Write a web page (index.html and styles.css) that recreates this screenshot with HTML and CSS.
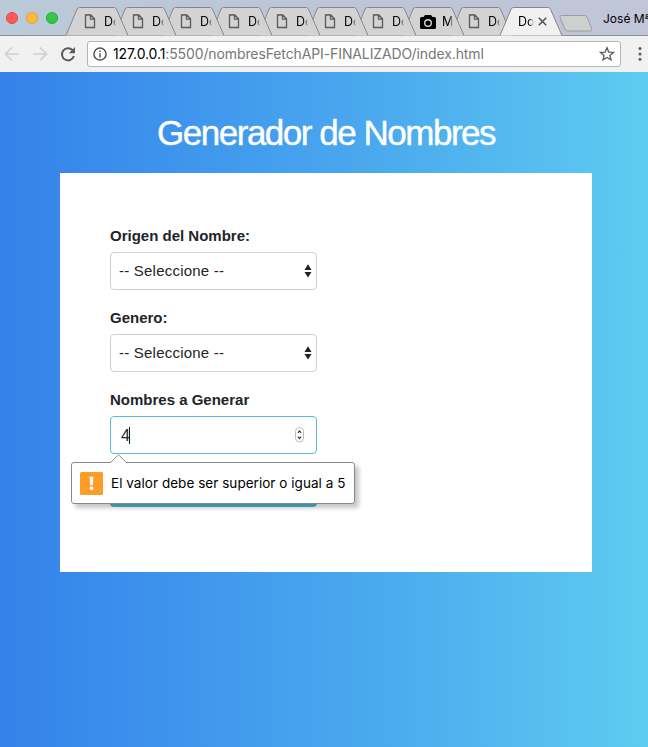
FILE: index.html
```html
<!DOCTYPE html>
<html lang="es">
<head>
<meta charset="utf-8">
<title>Generador de Nombres</title>
<link rel="stylesheet" href="styles.css">
</head>
<body>
<svg class="defs" aria-hidden="true">
  <symbol id="shape" viewBox="0 0 62 29"><path class="tab-shape" d="M0 28.5 L11 2.200 Q11.800 .5 13.500 .5 L48 .5 Q49.700 .5 50.500 2.200 L62 28.500"/></symbol>
  <symbol id="file" viewBox="0 0 12 15"><path class="file-line" d="M1.500 1 H6.800 L10.500 4.800 V13.500 H1.500 Z M6.500 1 V5.200 H10.500"/></symbol>
</svg>
<header class="browser">
  <div class="tabstrip">
    <div class="lights"><i class="red"></i><i class="yellow"></i><i class="green"></i></div>
    <div class="tabs">
      <div class="tab"><svg class="bg"><use href="#shape"/></svg><svg class="fav"><use href="#file"/></svg><span>Do</span></div>
      <div class="tab"><svg class="bg"><use href="#shape"/></svg><svg class="fav"><use href="#file"/></svg><span>Do</span></div>
      <div class="tab"><svg class="bg"><use href="#shape"/></svg><svg class="fav"><use href="#file"/></svg><span>Do</span></div>
      <div class="tab"><svg class="bg"><use href="#shape"/></svg><svg class="fav"><use href="#file"/></svg><span>Do</span></div>
      <div class="tab"><svg class="bg"><use href="#shape"/></svg><svg class="fav"><use href="#file"/></svg><span>Do</span></div>
      <div class="tab"><svg class="bg"><use href="#shape"/></svg><svg class="fav"><use href="#file"/></svg><span>Do</span></div>
      <div class="tab"><svg class="bg"><use href="#shape"/></svg><svg class="fav"><use href="#file"/></svg><span>Do</span></div>
      <div class="tab camera"><svg class="bg"><use href="#shape"/></svg><svg class="cam" viewBox="0 0 16 14"><path d="M5 0H11L12.500 2H14.500Q16 2 16 3.500V12.500Q16 14 14.500 14H1.500Q0 14 0 12.500V3.500Q0 2 1.500 2H3.500Z"/><circle cx="8" cy="8" r="3.300" fill="none" stroke="#d6d6d6" stroke-width="1.400"/></svg><span class="plain">M</span></div>
      <div class="tab"><svg class="bg"><use href="#shape"/></svg><svg class="fav"><use href="#file"/></svg><span>Do</span></div>
      <div class="tab active"><svg class="bg"><use href="#shape"/></svg><span>Do</span><svg class="close" viewBox="0 0 9 9"><path d="M.8 .8 8.200 8.200M8.200 .8 .8 8.200"/></svg></div>
    </div>
    <svg class="newtab" viewBox="0 0 34 17"><path d="M2.500 .5H25.500Q27.500 .5 28.300 2.500L32.500 13.500Q33.500 16 31.500 16H8.500Q6.500 16 5.700 14L1 2.500Q.4 .5 2.500 .5Z"/></svg>
    <div class="profile">José Mª</div>
  </div>
  <div class="toolbar">
    <svg class="nav" viewBox="0 0 82 36">
      <g class="arrows"><path d="M19 18H6M12 11.500 5.500 18 12 24.500"/><path d="M33 18H46M40 11.500 46.500 18 40 24.500"/></g>
      <path class="reload" d="M72.600 14.200A6.100 6.100 0 1 0 73.900 20"/><path class="reload-head" d="M75 11V17.200H68.800Z"/>
    </svg>
    <div class="address">
      <svg class="info" viewBox="0 0 14 14"><circle cx="7" cy="7" r="6.100"/><path d="M7 6.200V10.500M7 3.500V5"/></svg>
      <div class="url"><b>127.0.0.1</b>:5500/nombresFetchAPI-FINALIZADO/index.html</div>
      <svg class="star" viewBox="0 0 16 16"><path d="M8 1.700 9.800 6.100 14.400 6.400 10.900 9.400 12 13.900 8 11.500 4 13.900 5.100 9.400 1.600 6.400 6.200 6.100Z"/></svg>
    </div>
    <svg class="more" viewBox="0 0 4 16"><circle cx="2" cy="2.500" r="1.500"/><circle cx="2" cy="7.900" r="1.500"/><circle cx="2" cy="13.300" r="1.500"/></svg>
  </div>
</header>
<main class="page">
  <h1>Generador de Nombres</h1>
  <form class="panel">
    <div class="group">
      <label>Origen del Nombre:</label>
      <div class="field"><span>-- Seleccione --</span><svg class="updown" viewBox="0 0 8 14"><path d="M4 .3 7.500 5.900H.5ZM.5 8H7.500L4 13.600Z"/></svg></div>
    </div>
    <div class="group">
      <label>Genero:</label>
      <div class="field"><span>-- Seleccione --</span><svg class="updown" viewBox="0 0 8 14"><path d="M4 .3 7.500 5.900H.5ZM.5 8H7.500L4 13.600Z"/></svg></div>
    </div>
    <div class="group last">
      <label>Nombres a Generar</label>
      <div class="field focus"><span class="value">4</span><svg class="stepper" viewBox="0 0 10 16"><rect x=".5" y=".5" width="8" height="14.500" rx="4"/><path d="M2.900 5.900 4.500 3.900 6.100 5.900M2.900 9.600 4.500 11.600 6.100 9.600"/></svg></div>
      <div class="bubble">
        <svg class="tip" viewBox="0 0 18 10"><path d="M0 9.500 8.500 .8 17 9.500V10H0Z" fill="#fff"/><path d="M0 9 8.500 .8 17 9" fill="none" stroke="#888"/></svg>
        <svg class="warn" viewBox="0 0 23 23"><rect width="23" height="23" rx="1.500" fill="#fb9d26"/><path d="M9.600 4.800H13.400L12.900 13.200H10.100Z" fill="#fff"/><rect x="9.800" y="14.600" width="3.400" height="3.300" rx="1" fill="#fff"/></svg>
        <span>El valor debe ser superior o igual a 5</span>
      </div>
    </div>
    <div class="submit"></div>
  </form>
</main>
</body>
</html>
```
FILE: styles.css
```css
* { box-sizing: border-box; }
body { margin: 0; width: 648px; height: 747px; overflow: hidden; display: flex; flex-direction: column; font-family: "Liberation Sans", Arial, sans-serif; color: #212529; }
svg { display: block; flex: none; }
.defs { position: absolute; width: 0; height: 0; }
.browser { font-family: Inter, sans-serif; flex: none; height: 72px; background: #f1f1f1; }
.tabstrip { height: 36px; display: flex; background: linear-gradient(90deg, #bacad8, #bec5d6 60%, #c1c5d8); border-bottom: 1px solid #8e9095; }
.lights { display: flex; gap: 8px; width: 66px; padding: 12px 0 0 6px; flex: none; }
.lights i { width: 12px; height: 12px; border-radius: 50%; }
.red { background: #fc5b57; border: 1px solid #e2463f; }
.yellow { background: #fdbc40; border: 1px solid #e0a02b; }
.green { background: #34c84a; border: 1px solid #24ab35; }
.tabs { display: flex; padding-top: 7px; flex: none; }
.tab { position: relative; width: 62px; height: 29px; margin-right: -14px; display: flex; align-items: center; padding-left: 18px; flex: none; font-size: 12.500px; color: #000; }
.tab:nth-child(1) { z-index: 9; }
.tab:nth-child(2) { z-index: 8; }
.tab:nth-child(3) { z-index: 7; }
.tab:nth-child(4) { z-index: 6; }
.tab:nth-child(5) { z-index: 5; }
.tab:nth-child(6) { z-index: 4; }
.tab:nth-child(7) { z-index: 3; }
.tab:nth-child(8) { z-index: 2; }
.tab:nth-child(9) { z-index: 1; }
.bg { position: absolute; left: 0; top: 0; width: 62px; height: 29px; fill: #d4d3d4; stroke: #85878c; stroke-width: 1; z-index: -1; }
.fav { width: 12px; height: 15px; }
.file-line { fill: none; stroke: #5a5a5a; stroke-width: 1.300; }
.tab span { width: 12px; margin-left: 8px; overflow: hidden; white-space: nowrap; -webkit-mask-image: linear-gradient(90deg, #000 70%, transparent); mask-image: linear-gradient(90deg, #000 70%, transparent); }
.cam { width: 16px; height: 14px; }
.tab span.plain { margin-left: 6px; width: 11px; }
.tab.active { z-index: 10; width: 64px; margin: 0 0 0 1px; padding-left: 19px; }
.active .bg { width: 64px; fill: #f1f1f1; }
.tab.active span { margin: 0; width: 16px; }
.close { width: 9px; height: 9px; margin-left: 4px; stroke: #555; stroke-width: 1.600; }
.newtab { width: 34px; height: 17px; margin: 15px 0 0 -4px; fill: #cfcfd0; stroke: #9a9ca3; }
.profile { margin: 11px 0 0 10px; font-size: 12px; line-height: 16px; color: #000; white-space: nowrap; flex: none; }
.toolbar { height: 36px; display: flex; align-items: center; }
.nav { width: 82px; height: 36px; margin-right: 5px; fill: none; }
.arrows { stroke: #d0d0d0; stroke-width: 1.700; }
.reload { stroke: #5c5c5c; stroke-width: 2; }
.reload-head { fill: #5c5c5c; }
.address { width: 534px; height: 26px; background: #fff; border: 1px solid #b4b4b4; border-radius: 3px; display: flex; align-items: center; padding: 0 5px 0 5px; }
.info { width: 14px; height: 14px; fill: none; stroke: #555; stroke-width: 1.500; }
.url { flex: 1; margin-left: 6px; font-size: 14px; line-height: 18px; color: #777; white-space: nowrap; letter-spacing: -.11px; }
.url b { font-weight: 400; color: #000; }
.star { width: 16px; height: 16px; fill: none; stroke: #5c5c5c; stroke-width: 1.300; }
.more { width: 4px; height: 16px; margin-left: 17px; fill: #5c5c5c; }
.page { flex: 1; background: linear-gradient(90deg, #3581ea, #419aed 35%, #4eaeee 65%, #5dccf1); }
h1 { margin: 40px 0 0 157px; height: 42px; line-height: 42px; color: #fff; font-size: 35px; font-weight: 400; letter-spacing: -1.480px; white-space: nowrap; -webkit-text-stroke: .4px #fff; }
.panel { width: 532px; height: 399px; margin: 19px 0 0 60px; background: #fff; padding: 51px 50px; }
.group { position: relative; width: 207px; margin-bottom: 16px; }
label { display: block; height: 24px; line-height: 24px; margin-bottom: 4px; font-size: 15px; font-weight: 700; white-space: nowrap; }
.field { height: 38px; border: 1px solid #ced2d5; border-radius: 4px; display: flex; align-items: center; justify-content: space-between; padding: 0 4px 0 8px; font-size: 15px; letter-spacing: .22px; }
.field span { margin-top: -2px; }
.updown { width: 8px; height: 14px; fill: #222; }
.focus { border-color: #5bb9d8; padding: 0 11px 0 10px; }
.field .value { margin-top: 0; letter-spacing: -.6px; font-size: 16px; border-right: 1px solid #111; line-height: 17px; }
.stepper { width: 10px; height: 16px; fill: #fff; stroke: #bbb; }
.stepper path { fill: none; stroke: #333; stroke-width: 1.200; }
.bubble { position: absolute; left: -39px; top: 74px; width: 284px; height: 42px; display: flex; align-items: center; padding-left: 8px; background: #fff; border: 1px solid #888; border-radius: 3px; box-shadow: 4px 4px 4px rgba(0,0,0,.22); font-family: Inter, sans-serif; font-size: 13.500px; letter-spacing: .04px; color: #000; white-space: nowrap; }
.tip { position: absolute; left: 38px; top: -9px; width: 18px; height: 10px; }
.warn { width: 23px; height: 23px; margin-right: 8px; }
.submit { width: 207px; height: 37px; background: #4cb6d6; border-radius: 4px; }
```
